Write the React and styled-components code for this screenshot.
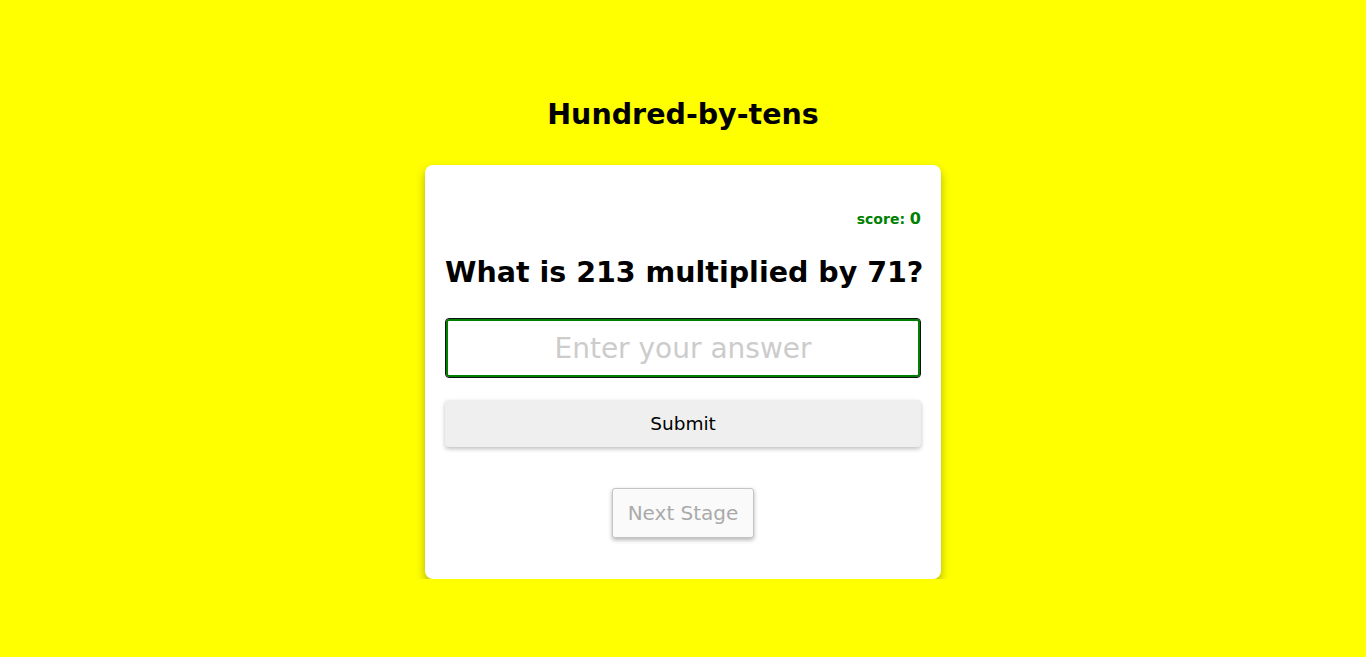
import React, {useState} from 'react';
import styled, {createGlobalStyle} from 'styled-components';

const GlobalStyle = createGlobalStyle`
body {
  margin: 0;
  background: #ffff00;
  font-family: "Comic Sans MS", "DejaVu Sans", sans-serif;
}
`

const Page = styled.div`
display: flex;
flex-direction: column;
align-items: center;
`
const Title = styled.h1`
margin: 95px 0 0;
font-size: 28.5px;
line-height: 40px;
font-weight: bold;
color: #000;
`
const Card = styled.div`
margin-top: 30px;
width: 516px;
box-sizing: border-box;
padding: 0 20px 41px;
background: #fff;
border-radius: 8px;
box-shadow: 0 5px 10px rgba(0, 0, 0, 0.3);
display: flex;
flex-direction: column;
`
const Score = styled.div`
margin-top: 44px;
align-self: flex-end;
line-height: 20px;
color: #008000;
font-weight: bold;
font-size: 14px;
`
const ScoreValue = styled.span`
font-size: 16px;
`
const Question = styled.h2`
margin: 24px 0 0;
line-height: 40px;
font-size: 28.5px;
text-align: center;
white-space: nowrap;
color: #000;
`
const AnswerInput = styled.input`
margin-top: 25px;
height: 60px;
width: 100%;
box-sizing: border-box;
border: 1px solid #111;
border-radius: 4px;
box-shadow: inset 0 0 0 2px #008000;
outline: none;
font-family: inherit;
font-size: 28px;
text-align: center;
caret-color: #008000;
&::placeholder {
  color: #cccccc;
}
`
const Button = styled.button`
font-family: inherit;
cursor: pointer;
`
const SubmitButton = styled(Button)`
margin-top: 22px;
height: 47px;
width: 100%;
border: none;
border-radius: 4px;
background: #efefef;
color: #000;
font-size: 18.5px;
box-shadow: 0 2px 4px rgba(0, 0, 0, 0.25);
`
const NextButton = styled(Button)`
margin-top: 41px;
align-self: center;
width: 142px;
height: 50px;
border: 1px solid #c4c4c4;
border-radius: 3px;
background: #fafafa;
color: #aaaaaa;
font-size: 20px;
box-shadow: 0 2px 4px rgba(0, 0, 0, 0.3);
&:disabled {
  cursor: default;
}
`

export default function App() {
    const [answer, setAnswer] = useState('');

    return (
        <Page>
            <GlobalStyle/>
            <Title>Hundred-by-tens</Title>
            <Card>
                <Score>score: <ScoreValue>0</ScoreValue></Score>
                <Question>What is 213 multiplied by 71?</Question>
                <AnswerInput
                    autoFocus
                    value={answer}
                    onChange={e => setAnswer(e.target.value)}
                    placeholder='Enter your answer'
                />
                <SubmitButton type='button'>Submit</SubmitButton>
                <NextButton type='button' disabled>Next Stage</NextButton>
            </Card>
        </Page>
    );
}
